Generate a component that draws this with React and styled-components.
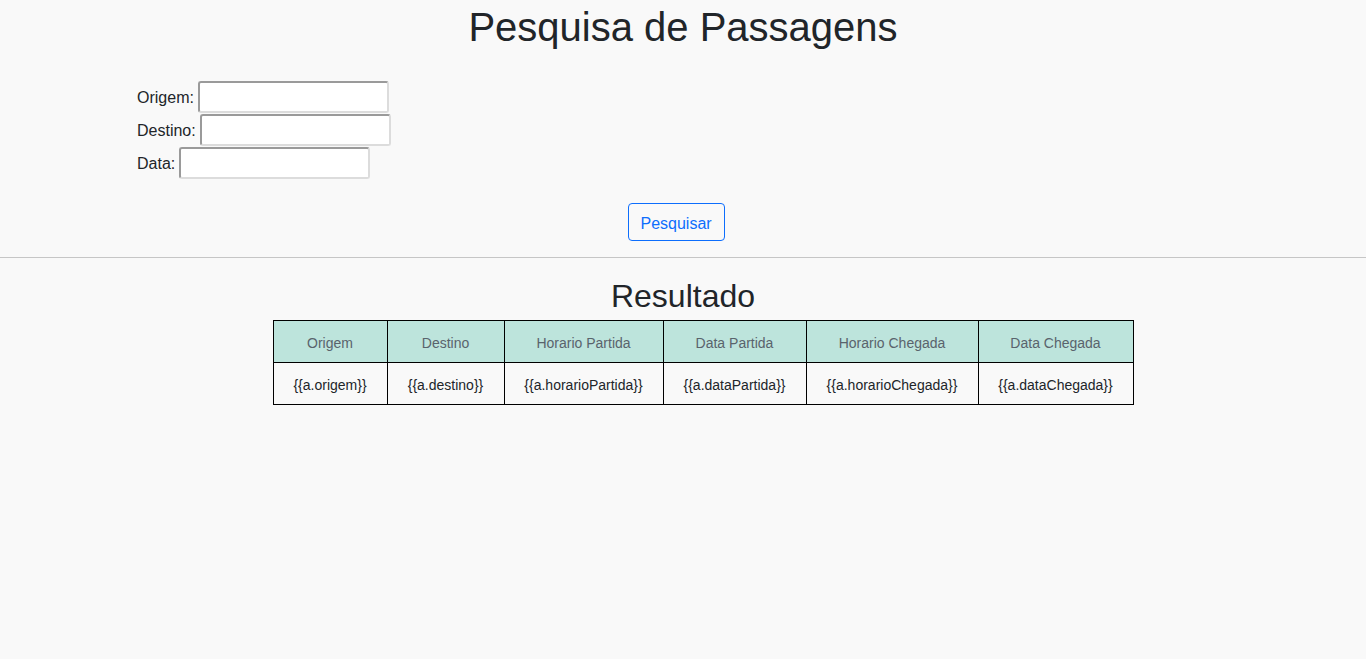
import React from "react";
import styled, { createGlobalStyle } from "styled-components";

const Global = createGlobalStyle`
  html, body { margin: 0; padding: 0; background: #f9f9f9; }
  body {
    font-family: "Liberation Sans", Arial, sans-serif;
    color: #212529;
    font-size: 16px;
    line-height: 1.5;
  }
  #root { min-height: 659px; }
`;

const Page = styled.div`
  display: flex;
  flex-direction: column;
  padding-top: 3px;
`;

const Title = styled.h1`
  margin: 0;
  font-size: 40px;
  font-weight: 400;
  line-height: 48px;
  text-align: center;
  color: #212529;
`;

const Form = styled.form`
  display: flex;
  flex-direction: column;
  padding: 29px 0 0 137px;
`;

const Row = styled.div`
  display: flex;
  align-items: center;
  height: 33px;
  gap: 4px;
`;

const Label = styled.label`
  font-size: 16px;
  color: #212529;
  padding-top: 3px;
`;

const Input = styled.input`
  box-sizing: border-box;
  width: 191px;
  height: 32px;
  margin-top: 1px;
  background: #fff;
  border-style: solid;
  border-width: 2px;
  border-color: #9a9a9a #dcdcdc #dcdcdc #9a9a9a;
  border-radius: 3px;
  padding: 1px 2px;
  font-family: inherit;
  font-size: 14px;
`;

const ButtonRow = styled.div`
  display: flex;
  justify-content: center;
  padding: 24px 14px 0 0;
`;

const Button = styled.button`
  font-family: "Liberation Sans", Arial, sans-serif;
  font-size: 16px;
  line-height: 24px;
  color: #0d6efd;
  background: transparent;
  border: 1px solid #0d6efd;
  border-radius: 4px;
  padding: 8px 12px 4px;
  width: 97px;
  cursor: pointer;
`;

const Divider = styled.hr`
  margin: 16px 0 0;
  border: 0;
  border-top: 1px solid #c6c6c6;
  width: 100%;
`;

const Subtitle = styled.h2`
  margin: 19px 0 0;
  font-size: 32px;
  font-weight: 400;
  line-height: 38px;
  text-align: center;
  color: #212529;
`;

const TableWrap = styled.div`
  display: flex;
  justify-content: center;
  padding-left: 40px;
  margin-top: 5px;
`;

const Table = styled.table`
  border-collapse: collapse;
  table-layout: fixed;
  width: 860px;
  font-size: 14px;
`;

const Th = styled.th`
  background: #bde4dc;
  color: #59636c;
  font-weight: 400;
  height: 38px;
  padding: 3px 0 0;
  border: 1px solid #000;
  text-align: center;
  vertical-align: middle;
`;

const Td = styled.td`
  background: #f9f9f9;
  color: #212529;
  height: 38px;
  padding: 3px 0 0;
  border: 1px solid #000;
  text-align: center;
  vertical-align: middle;
`;

const columns = [
  { title: "Origem", key: "origem", width: 114 },
  { title: "Destino", key: "destino", width: 117 },
  { title: "Horario Partida", key: "horarioPartida", width: 159 },
  { title: "Data Partida", key: "dataPartida", width: 143 },
  { title: "Horario Chegada", key: "horarioChegada", width: 172 },
  { title: "Data Chegada", key: "dataChegada", width: 155 },
];

export default function App() {
  return (
    <>
      <Global />
      <Page>
        <Title>Pesquisa de Passagens</Title>
        <Form onSubmit={(e) => e.preventDefault()}>
          <Row>
            <Label>Origem:</Label>
            <Input type="text" />
          </Row>
          <Row>
            <Label>Destino:</Label>
            <Input type="text" />
          </Row>
          <Row>
            <Label>Data:</Label>
            <Input type="text" />
          </Row>
        </Form>
        <ButtonRow>
          <Button type="button">Pesquisar</Button>
        </ButtonRow>
        <Divider />
        <Subtitle>Resultado</Subtitle>
        <TableWrap>
          <Table>
            <colgroup>
              {columns.map((c) => (
                <col key={c.key} style={{ width: c.width }} />
              ))}
            </colgroup>
            <thead>
              <tr>
                {columns.map((c) => (
                  <Th key={c.key}>{c.title}</Th>
                ))}
              </tr>
            </thead>
            <tbody>
              <tr>
                {columns.map((c) => (
                  <Td key={c.key}>{`{{a.${c.key}}}`}</Td>
                ))}
              </tr>
            </tbody>
          </Table>
        </TableWrap>
      </Page>
    </>
  );
}
